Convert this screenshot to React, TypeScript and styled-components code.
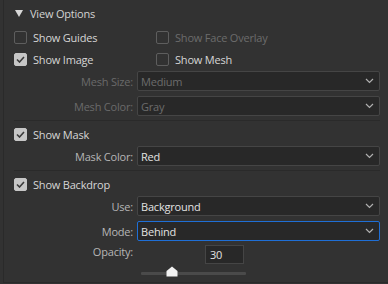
import React from "react";
import styled, { createGlobalStyle, css } from "styled-components";

const Global = createGlobalStyle`
  html, body { margin: 0; padding: 0; background: #323232; }
  body { font-family: "Open Sans", "Noto Sans", sans-serif; font-size: 11px; letter-spacing: -0.2px; }
  * { box-sizing: border-box; }
`;

const Panel = styled.div`
  margin-left: 3px;
  width: 385px;
  height: 283px;
  border-left: 1px solid #2a2a2a;
  border-bottom: 1px solid #2a2a2a;
  padding: 0 8px 0 10px;
  display: flex;
  flex-direction: column;
  color: #d4d4d4;
`;

const Header = styled.div`
  height: 26px;
  display: flex;
  align-items: center;
  gap: 7px;
  padding-left: 1px;
  color: #d2d2d2;
`;

const Triangle = styled.span`
  width: 0;
  height: 0;
  border-left: 4px solid transparent;
  border-right: 4px solid transparent;
  border-top: 7px solid #d8d8d8;
`;

const CheckGrid = styled.div`
  display: grid;
  grid-template-columns: 142px 1fr;
`;

const CheckRow = styled.label<{ $disabled?: boolean }>`
  height: 22px;
  display: flex;
  align-items: center;
  gap: 6px;
  color: ${(p) => (p.$disabled ? "#6c6c6c" : "#d6d6d6")};
  white-space: nowrap;
`;

const Box = styled.span<{ $checked?: boolean }>`
  width: 13px;
  height: 13px;
  border-radius: 2px;
  flex: none;
  display: flex;
  align-items: center;
  justify-content: center;
  ${(p) =>
    p.$checked
      ? css`
          background: #c6c6c6;
          border: 1px solid #c6c6c6;
        `
      : css`
          background: transparent;
          border: 1px solid #5e5e5e;
        `}
`;

const Check = () => (
  <svg width="9" height="7" viewBox="0 0 9 7">
    <path d="M1 3.5 L3.5 6 L8 1" fill="none" stroke="#3a3a3a" strokeWidth="1.6" />
  </svg>
);

const Checkbox = ({ label, checked, disabled }: { label: string; checked?: boolean; disabled?: boolean }) => (
  <CheckRow $disabled={disabled}>
    <Box $checked={checked}>{checked && <Check />}</Box>
    <span>{label}</span>
  </CheckRow>
);

const Field = styled.div<{ $gapTop?: number }>`
  display: grid;
  grid-template-columns: 119px 1fr;
  column-gap: 4px;
  align-items: center;
  height: 20px;
  margin-top: ${(p) => p.$gapTop ?? 5}px;
`;

const Label = styled.span<{ $disabled?: boolean }>`
  text-align: right;
  color: ${(p) => (p.$disabled ? "#6a6a6a" : "#b6b6b6")};
  white-space: nowrap;
`;

const SelectBox = styled.div<{ $disabled?: boolean; $focus?: boolean }>`
  height: 20px;
  background: #282828;
  border: 1px solid ${(p) => (p.$focus ? "#1f6fd6" : "#454545")};
  border-radius: 2px;
  display: flex;
  align-items: center;
  justify-content: space-between;
  padding: 0 5px 0 3px;
  color: ${(p) => (p.$disabled ? "#6c6c6c" : "#e2e2e2")};
`;

const Chevron = () => (
  <svg width="9" height="6" viewBox="0 0 9 6">
    <path d="M1 1 L4.5 4.5 L8 1" fill="none" stroke="#b0b0b0" strokeWidth="1.2" />
  </svg>
);

const Select = ({ value, disabled, focus }: { value: string; disabled?: boolean; focus?: boolean }) => (
  <SelectBox $disabled={disabled} $focus={focus}>
    <span>{value}</span>
    <Chevron />
  </SelectBox>
);

const Separator = styled.div<{ $top: number; $bottom: number }>`
  height: 1px;
  background: #2a2a2a;
  margin: ${(p) => p.$top}px 0 ${(p) => p.$bottom}px 0;
`;

const OpacityRow = styled.div`
  display: grid;
  grid-template-columns: 119px 1fr;
  column-gap: 4px;
  height: 19px;
  margin-top: 4px;
`;

const OpacityLabel = styled(Label)`
  align-self: start;
  line-height: 14px;
`;

const NumInput = styled.div`
  margin-left: 68px;
  width: 39px;
  height: 19px;
  background: #282828;
  border: 1px solid #454545;
  color: #e2e2e2;
  padding-left: 4px;
  display: flex;
  align-items: center;
`;

const SliderWrap = styled.div`
  margin-left: 127px;
  width: 105px;
  height: 14px;
  position: relative;
`;

const Track = styled.div`
  position: absolute;
  left: 0;
  right: 0;
  top: 8px;
  height: 3px;
  background: #4a4a4a;
  border-radius: 1px;
`;

const Thumb = styled.svg`
  position: absolute;
  top: 2px;
`;

const Slider = ({ value }: { value: number }) => (
  <SliderWrap>
    <Track />
    <Thumb width="12" height="11" viewBox="0 0 12 11" style={{ left: `${(value / 100) * 104 - 6}px` }}>
      <path d="M6 0.5 L11.5 5 L11.5 10.5 L0.5 10.5 L0.5 5 Z" fill="#f2f2f2" />
    </Thumb>
  </SliderWrap>
);

export default function App() {
  return (
    <>
      <Global />
      <Panel>
        <Header>
          <Triangle />
          <span>View Options</span>
        </Header>
        <CheckGrid>
          <Checkbox label="Show Guides" />
          <Checkbox label="Show Face Overlay" disabled />
          <Checkbox label="Show Image" checked />
          <Checkbox label="Show Mesh" />
        </CheckGrid>
        <Field $gapTop={1}>
          <Label $disabled>Mesh Size:</Label>
          <Select value="Medium" disabled />
        </Field>
        <Field>
          <Label $disabled>Mesh Color:</Label>
          <Select value="Gray" disabled />
        </Field>
        <Separator $top={4} $bottom={2} />
        <Checkbox label="Show Mask" checked />
        <Field $gapTop={1}>
          <Label>Mask Color:</Label>
          <Select value="Red" />
        </Field>
        <Separator $top={4} $bottom={2} />
        <Checkbox label="Show Backdrop" checked />
        <Field $gapTop={1}>
          <Label>Use:</Label>
          <Select value="Background" />
        </Field>
        <Field>
          <Label>Mode:</Label>
          <Select value="Behind" focus />
        </Field>
        <OpacityRow>
          <OpacityLabel>Opacity:</OpacityLabel>
          <NumInput>30</NumInput>
        </OpacityRow>
        <Slider value={30} />
      </Panel>
    </>
  );
}
